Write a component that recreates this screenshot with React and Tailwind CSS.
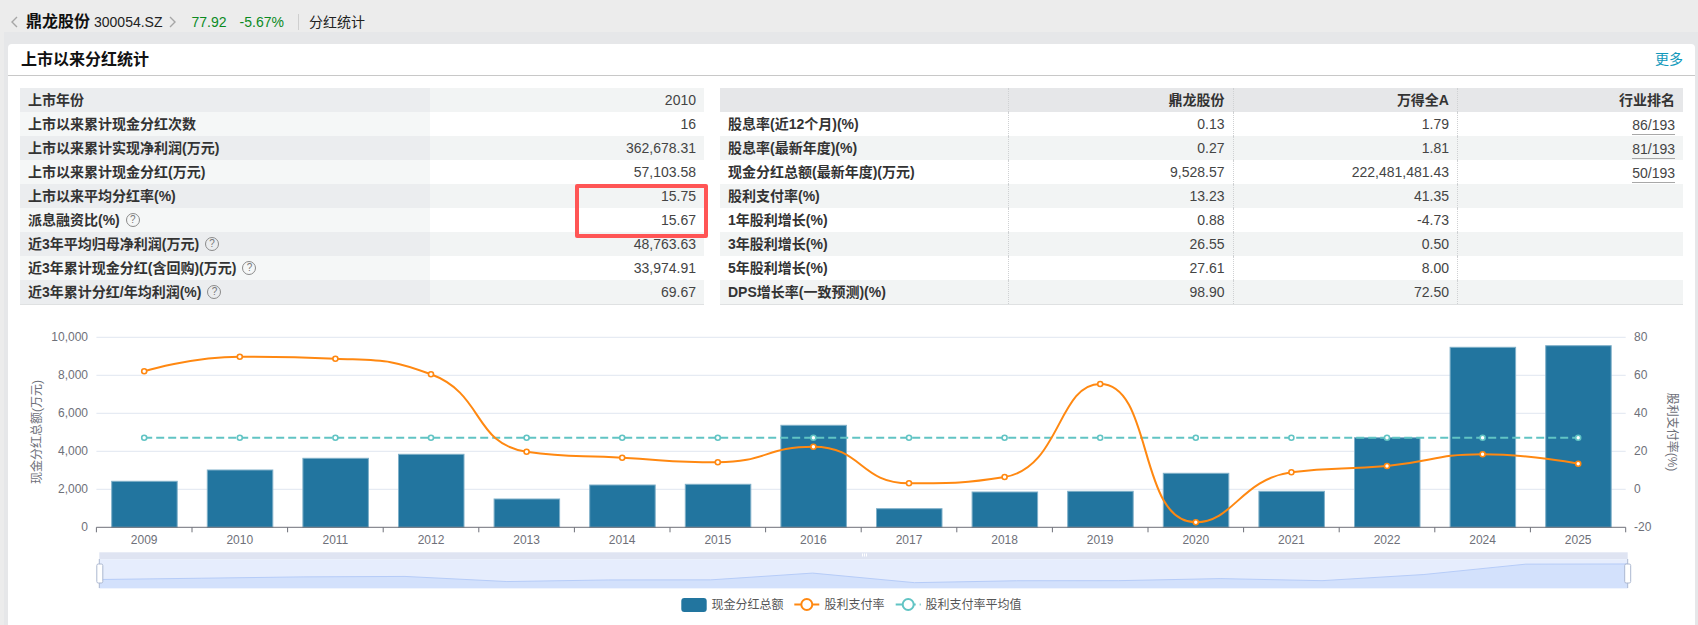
const FONT = '"Liberation Sans", "Noto Sans CJK SC", sans-serif';

const leftRows = [
  { label: "上市年份", value: "2010" },
  { label: "上市以来累计现金分红次数", value: "16" },
  { label: "上市以来累计实现净利润(万元)", value: "362,678.31" },
  { label: "上市以来累计现金分红(万元)", value: "57,103.58" },
  { label: "上市以来平均分红率(%)", value: "15.75" },
  { label: "派息融资比(%)", value: "15.67", help: true },
  { label: "近3年平均归母净利润(万元)", value: "48,763.63", help: true },
  { label: "近3年累计现金分红(含回购)(万元)", value: "33,974.91", help: true },
  { label: "近3年累计分红/年均利润(%)", value: "69.67", help: true },
];

const rightRows = [
  ["股息率(近12个月)(%)", "0.13", "1.79", "86/193"],
  ["股息率(最新年度)(%)", "0.27", "1.81", "81/193"],
  ["现金分红总额(最新年度)(万元)", "9,528.57", "222,481,481.43", "50/193"],
  ["股利支付率(%)", "13.23", "41.35", ""],
  ["1年股利增长(%)", "0.88", "-4.73", ""],
  ["3年股利增长(%)", "26.55", "0.50", ""],
  ["5年股利增长(%)", "27.61", "8.00", ""],
  ["DPS增长率(一致预测)(%)", "98.90", "72.50", ""],
];

const years = [2009, 2010, 2011, 2012, 2013, 2014, 2015, 2016, 2017, 2018, 2019, 2020, 2021, 2022, 2024, 2025];
const barTops = [481.3, 470, 458.3, 454.3, 499, 485, 484.3, 425.3, 508.7, 492, 491.3, 473.3, 491.3, 437.7, 347.3, 345.7];
const lineYs = [371.3, 356.7, 358.7, 374.3, 451.7, 457.7, 462.3, 446.7, 483.3, 477, 384, 522.3, 472.3, 466, 454.3, 463.7];
const avgY = 437.7;

const axisX = 96.4;
const catW = 95.6;
const baseY = 527.3;
const centers = years.map((_, i) => axisX + catW * (i + 0.5));
const linePts = centers.map((x, i) => [x, lineYs[i]]);

const clamp = (v, a, b) => Math.max(Math.min(a, b), Math.min(v, Math.max(a, b)));

// smoothing with the control points kept between neighbours, so peaks don't overshoot
function smoothPath(pts, smooth = 0.5) {
  const cps = pts.map((p, i) => {
    if (i === 0 || i === pts.length - 1) return { in: p, out: p };
    const prev = pts[i - 1];
    const next = pts[i + 1];
    const len0 = Math.hypot(p[0] - prev[0], p[1] - prev[1]);
    const len1 = Math.hypot(next[0] - p[0], next[1] - p[1]);
    const ratio = len1 / (len0 + len1);
    let ox = clamp(p[0] + (next[0] - prev[0]) * smooth * ratio, p[0], next[0]);
    let oy = clamp(p[1] + (next[1] - prev[1]) * smooth * ratio, p[1], next[1]);
    const ix = clamp(p[0] - ((ox - p[0]) * len0) / len1, p[0], prev[0]);
    const iy = clamp(p[1] - ((oy - p[1]) * len0) / len1, p[1], prev[1]);
    ox = p[0] + ((p[0] - ix) * len1) / len0;
    oy = p[1] + ((p[1] - iy) * len1) / len0;
    return { in: [ix, iy], out: [ox, oy] };
  });
  let d = `M${pts[0][0]} ${pts[0][1]}`;
  for (let i = 1; i < pts.length; i++) {
    const a = cps[i - 1].out;
    const b = cps[i].in;
    d += ` C${a[0]} ${a[1]} ${b[0]} ${b[1]} ${pts[i][0]} ${pts[i][1]}`;
  }
  return d;
}

const zoomLeft = 99.3;
const zoomRight = 1627.7;
const zoomBottom = 588.3;
const zoomPts = barTops.map((top, i) => [
  zoomLeft + ((zoomRight - zoomLeft) / 15) * i,
  584.8 - (baseY - top) * 0.1147,
]);
const zoomLine = zoomPts.map((p, i) => `${i ? "L" : "M"}${p[0]} ${p[1]}`).join(" ");

function HelpIcon() {
  return (
    <span className="ml-[6px] flex h-[14px] w-[14px] items-center justify-center rounded-full border border-[#8a8a8a] text-[10px] font-normal leading-none text-[#777]">
      ?
    </span>
  );
}

function LeftTable() {
  return (
    <div className="relative w-[684px] border-b border-[#dfe1e2]">
      {leftRows.map((row, i) => (
        <div key={row.label} className="flex h-[24px] items-center text-[14px]">
          <div className={`flex h-full w-[410px] items-center pl-[8px] font-bold text-[#333] ${i % 2 === 0 ? "bg-[#ebedef]" : "bg-[#f5f7f7]"}`}>
            {row.label}
            {row.help && <HelpIcon />}
          </div>
          <div className={`flex h-full flex-1 items-center justify-end pr-[8px] text-[#444] ${i % 2 === 0 ? "bg-[#f2f4f4]" : "bg-white"}`}>
            {row.value}
          </div>
        </div>
      ))}
      <div className="absolute left-[555px] top-[96px] h-[54px] w-[133px] rounded-[2px] border-[4px] border-[#ff5555]" />
    </div>
  );
}

const colCls = "grid grid-cols-[288px_224.5px_224.5px_226px]";
const cellCls = "flex h-full items-center justify-end border-l border-dotted border-[#cfd1d3] pr-[8px]";

function RightTable() {
  return (
    <div className="w-[963px] border-b border-[#dfe1e2] text-[14px]">
      <div className={`${colCls} h-[24px] items-center bg-[#e6e7e9] font-bold text-[#333]`}>
        <div />
        <div className={cellCls}>鼎龙股份</div>
        <div className={cellCls}>万得全A</div>
        <div className={cellCls}>行业排名</div>
      </div>
      {rightRows.map((row, i) => (
        <div key={row[0]} className={`${colCls} h-[24px] items-center text-[#444] ${i % 2 === 0 ? "bg-white" : "bg-[#f2f4f4]"}`}>
          <div className="pl-[8px] font-bold text-[#333]">{row[0]}</div>
          <div className={cellCls}>{row[1]}</div>
          <div className={cellCls}>{row[2]}</div>
          <div className={cellCls}>
            {row[3] && <span className="h-[22px] border-b border-[#a8a8a8] leading-[24px]">{row[3]}</span>}
          </div>
        </div>
      ))}
    </div>
  );
}

function Chart() {
  const leftTicks = ["10,000", "8,000", "6,000", "4,000", "2,000", "0"];
  const rightTicks = ["80", "60", "40", "20", "0", "-20"];
  const gridY = [337.3, 375.3, 413.3, 451.3, 489.3];
  const labelProps = { fontSize: 12, fill: "#6e7079", fontFamily: FONT };

  return (
    <svg viewBox="8 305 1687 320" className="block h-[320px] w-[1687px]">
      {gridY.map((y) => (
        <line key={y} x1={axisX} x2={1625.7} y1={y} y2={y} stroke="#e0e6f1" />
      ))}
      {leftTicks.map((t, i) => (
        <text key={t} x={88} y={337.3 + i * 38 + 4} textAnchor="end" {...labelProps}>{t}</text>
      ))}
      {rightTicks.map((t, i) => (
        <text key={t} x={1634} y={337.3 + i * 38 + 4} {...labelProps}>{t}</text>
      ))}
      <text transform="translate(41 432) rotate(-90)" textAnchor="middle" {...labelProps}>现金分红总额(万元)</text>
      <text transform="translate(1668 432) rotate(90)" textAnchor="middle" {...labelProps}>股利支付率(%)</text>

      {centers.map((x, i) => (
        <rect key={years[i]} x={x - 32.5} y={barTops[i]} width={65.5} height={baseY - barTops[i]} fill="#22759f" stroke="#7fb0c9" strokeWidth="1" />
      ))}

      <line x1={axisX} x2={1625.7} y1={baseY} y2={baseY} stroke="#6e7079" />
      {years.map((_, i) => (
        <line key={i} x1={axisX + catW * i} x2={axisX + catW * i} y1={baseY} y2={baseY + 5} stroke="#6e7079" />
      ))}
      <line x1={1625.7} x2={1625.7} y1={baseY} y2={baseY + 5} stroke="#6e7079" />
      {centers.map((x, i) => (
        <text key={years[i]} x={x} y={544} textAnchor="middle" {...labelProps}>{years[i]}</text>
      ))}

      <line x1={centers[0]} x2={centers[15]} y1={avgY} y2={avgY} stroke="#61c4c4" strokeWidth="2" strokeDasharray="8 4" />
      {centers.map((x) => (
        <circle key={x} cx={x} cy={avgY} r="2.5" fill="#fff" stroke="#61c4c4" strokeWidth="1.6" />
      ))}
      <path d={smoothPath(linePts)} fill="none" stroke="#ff8811" strokeWidth="2" />
      {linePts.map(([x, y]) => (
        <circle key={x} cx={x} cy={y} r="2.5" fill="#fff" stroke="#ff8811" strokeWidth="1.6" />
      ))}

      {/* data zoom */}
      <rect x={zoomLeft} y={552.3} width={zoomRight - zoomLeft} height={7} fill="#dfe4f2" />
      <rect x={zoomLeft} y={559.3} width={zoomRight - zoomLeft} height={29} fill="#e6edfd" />
      <path d={`${zoomLine} L${zoomRight} ${zoomBottom} L${zoomLeft} ${zoomBottom} Z`} fill="#d3e1fc" />
      <path d={zoomLine} fill="none" stroke="#b6ccf8" />
      <rect x={862} y={553.5} width={1} height={3} fill="#fff" />
      <rect x={864} y={553.5} width={1} height={3} fill="#fff" />
      <rect x={866} y={553.5} width={1} height={3} fill="#fff" />
      <line x1={zoomLeft} x2={zoomLeft} y1={559} y2={588} stroke="#acb8d1" />
      <line x1={zoomRight} x2={zoomRight} y1={559} y2={588} stroke="#acb8d1" />
      <rect x={96.8} y={564} width={6} height={19} rx="1.5" fill="#fff" stroke="#acb8d1" />
      <rect x={1624.7} y={564} width={6} height={19} rx="1.5" fill="#fff" stroke="#acb8d1" />

      {/* legend */}
      <rect x={681.3} y={598} width={25.4} height={14} rx="3" fill="#22759f" />
      <text x={711.5} y={608.5} {...labelProps} fill="#555">现金分红总额</text>
      <line x1={794.3} x2={819.3} y1={604.5} y2={604.5} stroke="#ff8811" strokeWidth="2" />
      <circle cx={806.8} cy={604.5} r="5.5" fill="#fff" stroke="#ff8811" strokeWidth="2" />
      <text x={824.5} y={608.5} {...labelProps} fill="#555">股利支付率</text>
      <line x1={895.7} x2={920.7} y1={604.5} y2={604.5} stroke="#61c4c4" strokeWidth="2" strokeDasharray="8 4" />
      <circle cx={908.2} cy={604.5} r="5.5" fill="#fff" stroke="#61c4c4" strokeWidth="2" />
      <text x={925.5} y={608.5} {...labelProps} fill="#555">股利支付率平均值</text>
    </svg>
  );
}

function Chevron({ flip }) {
  return (
    <svg width="7" height="12" viewBox="0 0 7 12" className={flip ? "rotate-180" : ""}>
      <path d="M6 1 1 6l5 5" fill="none" stroke="#a6a6a6" strokeWidth="1.4" />
    </svg>
  );
}

export default function App() {
  return (
    <div className="h-[625px] w-[1698px] overflow-hidden bg-[#ececec]" style={{ fontFamily: FONT }}>
      <div className="flex h-[32px] items-start pt-[12px]">
        <div className="flex h-[20px] items-center">
          <span className="ml-[11px] mr-[8px] flex"><Chevron /></span>
          <span className="text-[16px] font-bold text-[#111]">鼎龙股份</span>
          <span className="ml-[4px] text-[14px] text-[#222]">300054.SZ</span>
          <span className="ml-[6px] flex"><Chevron flip /></span>
          <span className="ml-[16px] text-[14px] text-[#0b8a1f]">77.92</span>
          <span className="ml-[13px] text-[14px] text-[#0b8a1f]">-5.67%</span>
          <span className="ml-[14px] h-[16px] w-px bg-[#cfcfcf]" />
          <span className="ml-[10px] text-[14px] text-[#222]">分红统计</span>
        </div>
      </div>
      <div className="ml-[4px] h-[593px] bg-[#e6e7e9] pl-[4px] pt-[12px]">
        <div className="h-[581px] w-[1687px] rounded-t-[4px] bg-white">
          <div className="flex h-[32px] items-center justify-between border-b border-[#c8c8c8] pl-[13px] pr-[12px]">
            <span className="text-[16px] font-bold text-[#111]">上市以来分红统计</span>
            <span className="text-[14px] text-[#1199bb]">更多</span>
          </div>
          <div className="flex gap-[16px] px-[12px] pt-[12px]">
            <LeftTable />
            <RightTable />
          </div>
          <Chart />
        </div>
      </div>
    </div>
  );
}
